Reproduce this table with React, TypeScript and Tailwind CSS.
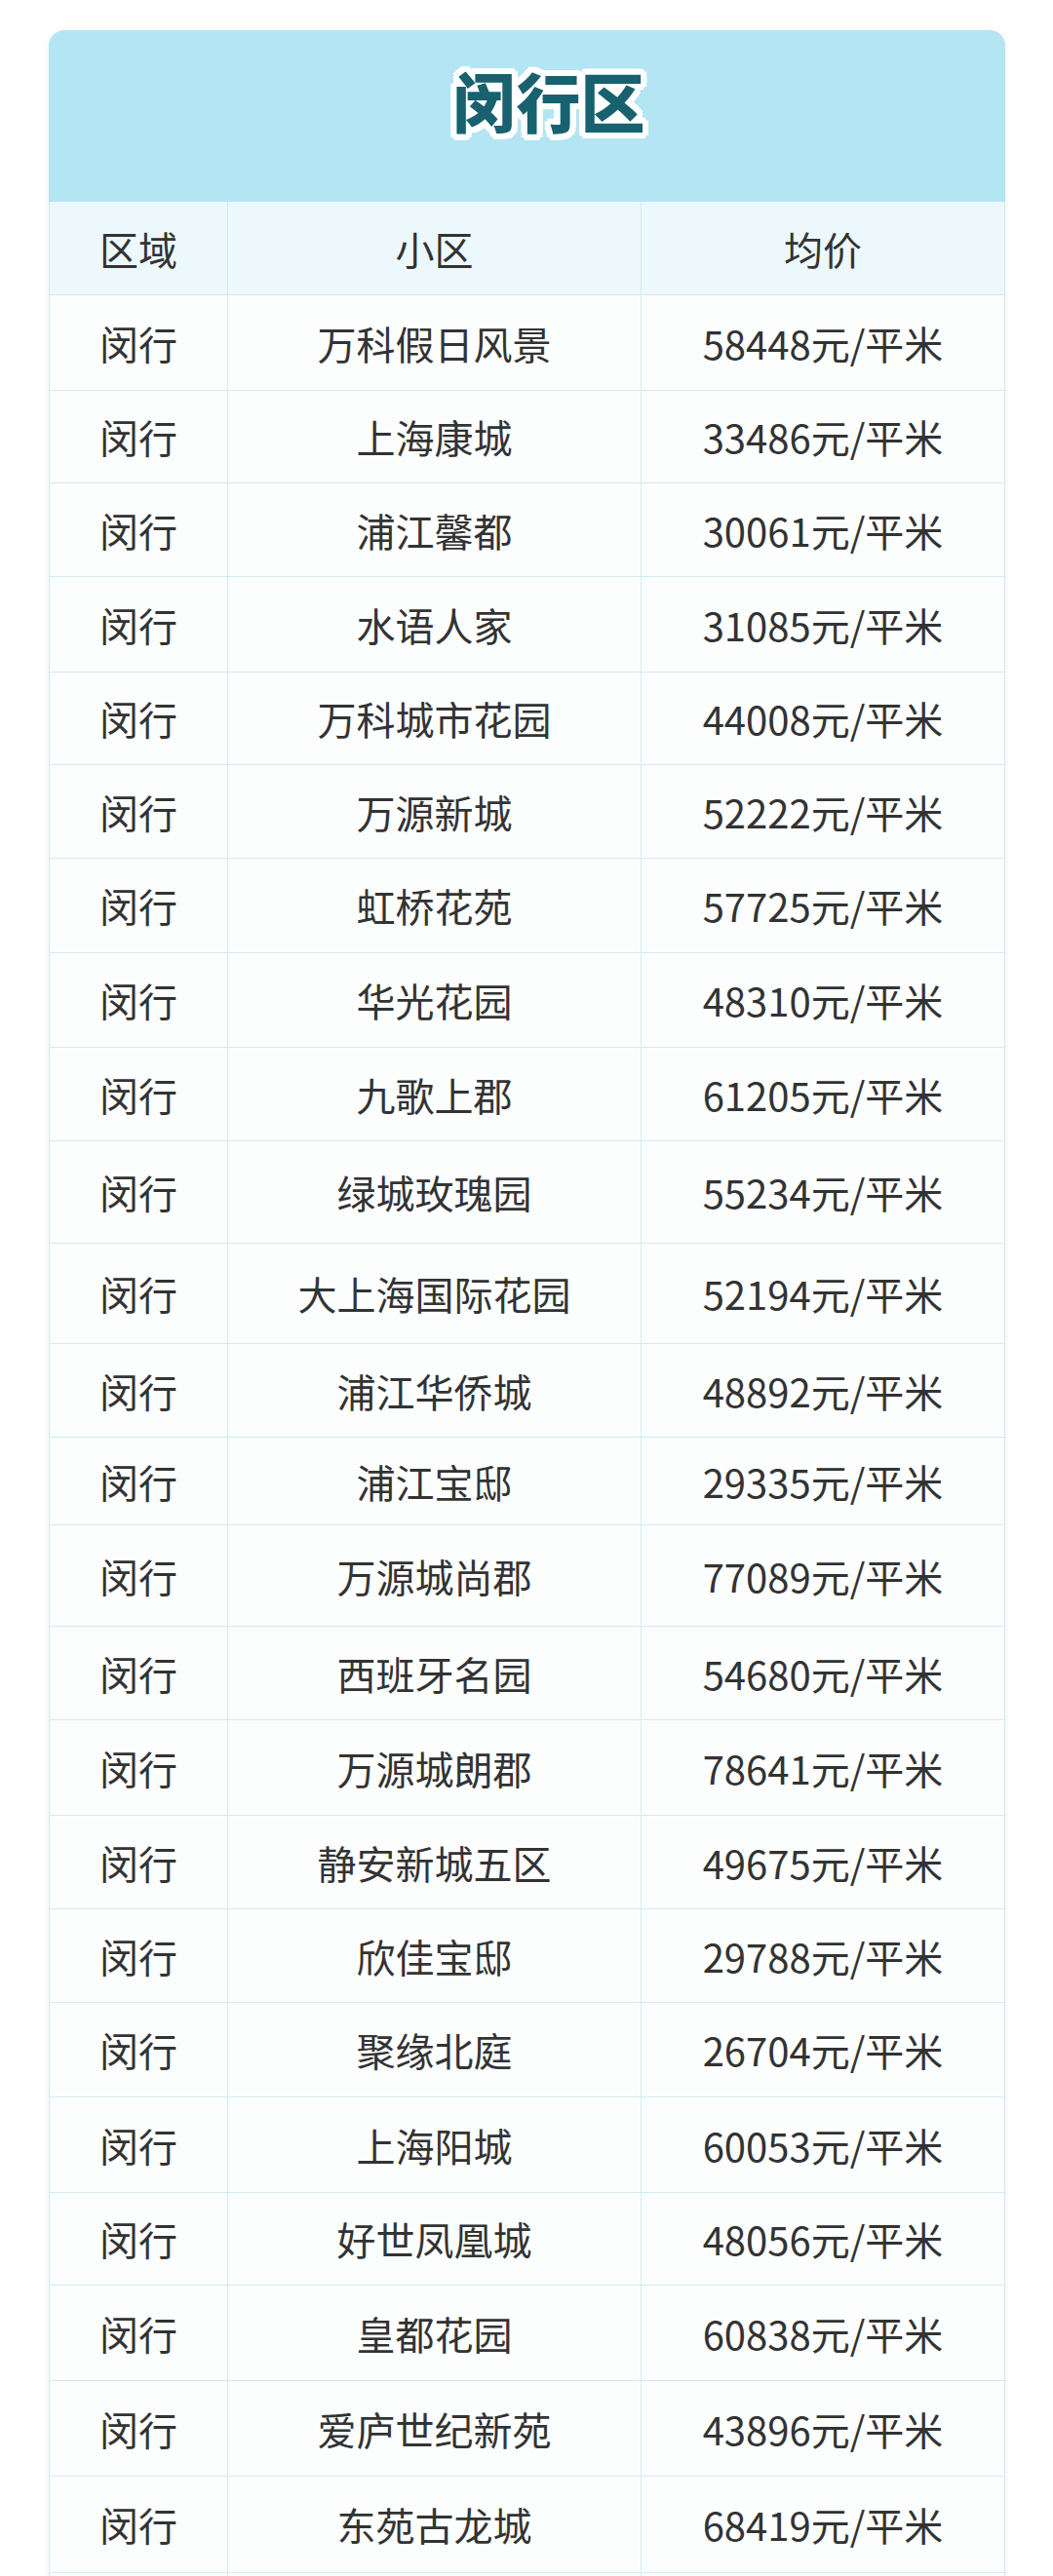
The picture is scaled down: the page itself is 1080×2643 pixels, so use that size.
const rows = [
  { name: "万科假日风景", price: "58448", h: "h-[98px]" },
  { name: "上海康城", price: "33486", h: "h-[95px]" },
  { name: "浦江馨都", price: "30061", h: "h-[96px]" },
  { name: "水语人家", price: "31085", h: "h-[98px]" },
  { name: "万科城市花园", price: "44008", h: "h-[95px]" },
  { name: "万源新城", price: "52222", h: "h-[96px]" },
  { name: "虹桥花苑", price: "57725", h: "h-[97px]" },
  { name: "华光花园", price: "48310", h: "h-[97px]" },
  { name: "九歌上郡", price: "61205", h: "h-[96px]" },
  { name: "绿城玫瑰园", price: "55234", h: "h-[105px]" },
  { name: "大上海国际花园", price: "52194", h: "h-[103px]" },
  { name: "浦江华侨城", price: "48892", h: "h-[96px]" },
  { name: "浦江宝邸", price: "29335", h: "h-[90px]" },
  { name: "万源城尚郡", price: "77089", h: "h-[104px]" },
  { name: "西班牙名园", price: "54680", h: "h-[96px]" },
  { name: "万源城朗郡", price: "78641", h: "h-[98px]" },
  { name: "静安新城五区", price: "49675", h: "h-[96px]" },
  { name: "欣佳宝邸", price: "29788", h: "h-[96px]" },
  { name: "聚缘北庭", price: "26704", h: "h-[97px]" },
  { name: "上海阳城", price: "60053", h: "h-[98px]" },
  { name: "好世凤凰城", price: "48056", h: "h-[95px]" },
  { name: "皇都花园", price: "60838", h: "h-[98px]" },
  { name: "爱庐世纪新苑", price: "43896", h: "h-[98px]" },
  { name: "东苑古龙城", price: "68419", h: "h-[99px]" },
];

const font = "font-['Noto_Sans_CJK_SC','Noto_Sans',sans-serif]";

function Row({
  cells,
  className,
}: {
  cells: [string, string, string];
  className: string;
}) {
  return (
    <div
      className={`grid grid-cols-[183px_424px_1fr] border-b border-[#d2eaf1] text-[40px] leading-none text-[#333] ${className}`}
    >
      <div className="flex items-center justify-center border-r border-[#d2eaf1]">
        {cells[0]}
      </div>
      <div className="flex items-center justify-center border-r border-[#d2eaf1]">
        {cells[1]}
      </div>
      <div className="flex items-center justify-center">{cells[2]}</div>
    </div>
  );
}

export default function App() {
  return (
    <div className={`h-[2643px] overflow-hidden bg-white ${font}`}>
      <div className="ml-[50px] mt-[31px] w-[981px] overflow-hidden rounded-t-[16px] shadow-[0_0_6px_rgba(0,0,0,0.07)]">
        <div className="flex h-[176px] justify-center bg-[#b3e5f2] pl-[44px] pt-[38px]">
          <h1 className="text-[66px] font-black leading-none text-[#18616f] [text-shadow:6px_0_0_#fff,-6px_0_0_#fff,0_6px_0_#fff,0_-6px_0_#fff,4px_4px_0_#fff,-4px_4px_0_#fff,4px_-4px_0_#fff,-4px_-4px_0_#fff,6px_3px_0_#fff,-6px_3px_0_#fff,6px_-3px_0_#fff,-6px_-3px_0_#fff,3px_6px_0_#fff,-3px_6px_0_#fff,3px_-6px_0_#fff,-3px_-6px_0_#fff]">
            闵行区
          </h1>
        </div>
        <div className="border-x border-[#d2eaf1]">
          <Row cells={["区域", "小区", "均价"]} className="h-[96px] bg-[#ecf8fb]" />
          {rows.map((r) => (
            <Row
              key={r.name}
              cells={["闵行", r.name, `${r.price}元/平米`]}
              className={`${r.h} bg-[#fcfefe]`}
            />
          ))}
          {/* next row is cut off by the page edge */}
          <Row cells={["", "", ""]} className="h-[97px] bg-[#fcfefe]" />
        </div>
      </div>
    </div>
  );
}
